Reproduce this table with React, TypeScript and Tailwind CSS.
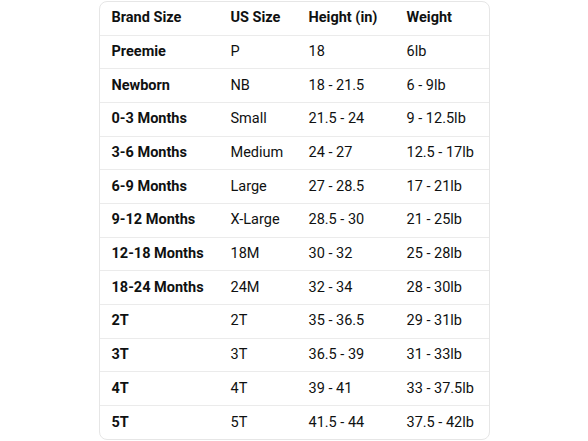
import React from "react";

const rows: [string, string, string, string][] = [
  ["Preemie", "P", "18", "6lb"],
  ["Newborn", "NB", "18 - 21.5", "6 - 9lb"],
  ["0-3 Months", "Small", "21.5 - 24", "9 - 12.5lb"],
  ["3-6 Months", "Medium", "24 - 27", "12.5 - 17lb"],
  ["6-9 Months", "Large", "27 - 28.5", "17 - 21lb"],
  ["9-12 Months", "X-Large", "28.5 - 30", "21 - 25lb"],
  ["12-18 Months", "18M", "30 - 32", "25 - 28lb"],
  ["18-24 Months", "24M", "32 - 34", "28 - 30lb"],
  ["2T", "2T", "35 - 36.5", "29 - 31lb"],
  ["3T", "3T", "36.5 - 39", "31 - 33lb"],
  ["4T", "4T", "39 - 41", "33 - 37.5lb"],
  ["5T", "5T", "41.5 - 44", "37.5 - 42lb"],
];

export default function App() {
  return (
    <div
      className="w-[588px] h-[441px] bg-white flex justify-center pt-px"
      style={{ fontFamily: 'Roboto, "Liberation Sans", Arial, sans-serif' }}
    >
      <div className="w-[391px] h-[439px] border border-[#e6e6e6] rounded-[8px] overflow-hidden">
        <table className="w-full table-fixed border-collapse text-[14.5px] text-[#0f1111]">
          <colgroup>
            <col className="w-[119px]" />
            <col className="w-[78px]" />
            <col className="w-[98px]" />
            <col />
          </colgroup>
          <thead>
            <tr className="h-[33px] border-b border-[#ebebeb]">
              <th className="text-left font-bold pl-[12px]">Brand Size</th>
              <th className="text-left font-bold pl-[12px]">US Size</th>
              <th className="text-left font-bold pl-[12px]">Height (in)</th>
              <th className="text-left font-bold pl-[12px]">Weight</th>
            </tr>
          </thead>
          <tbody>
            {rows.map((r, i) => (
              <tr
                key={r[0]}
                className={
                  i < rows.length - 1
                    ? "h-[33.7px] border-b border-[#ebebeb]"
                    : "h-[33.7px]"
                }
              >
                <td className="font-bold pl-[12px]">{r[0]}</td>
                <td className="pl-[12px]">{r[1]}</td>
                <td className="pl-[12px]">{r[2]}</td>
                <td className="pl-[12px]">{r[3]}</td>
              </tr>
            ))}
          </tbody>
        </table>
      </div>
    </div>
  );
}
